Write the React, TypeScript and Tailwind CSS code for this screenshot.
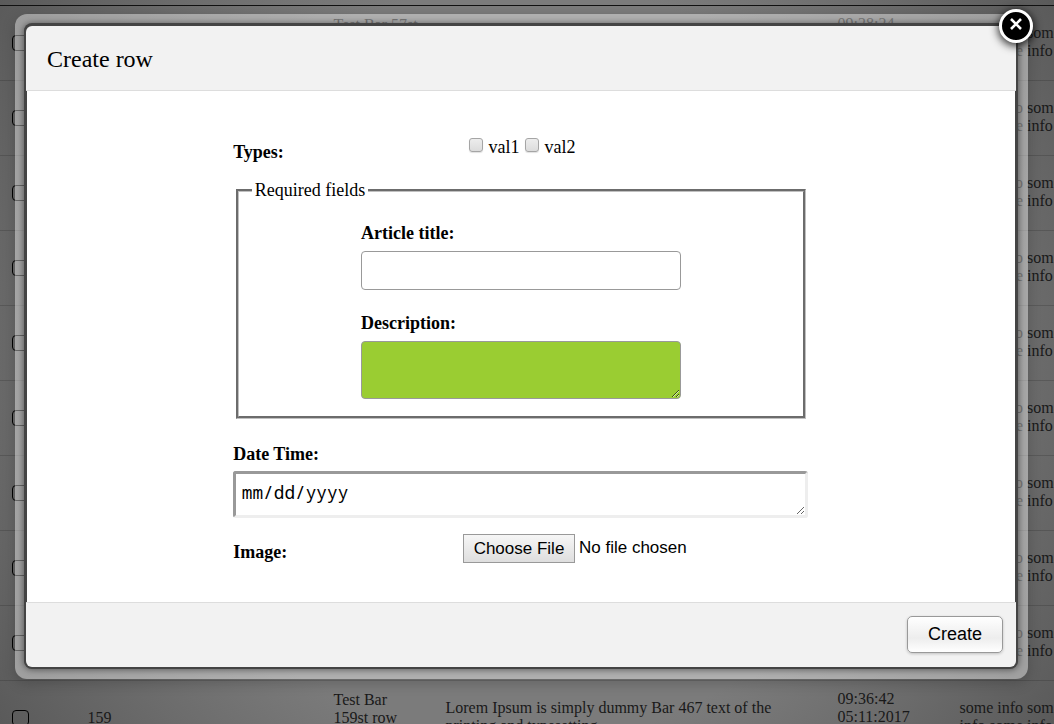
type Row = { id: string; name?: string; text?: string; time?: string; date?: string };

const ROWS: Row[] = [
  { id: "57", name: "Test Bar 57st", time: "09:28:24" },
  { id: "60" },
  { id: "72" },
  { id: "85" },
  { id: "97" },
  { id: "108" },
  { id: "121" },
  { id: "134" },
  { id: "146" },
  {
    id: "159",
    name: "Test Bar 159st row",
    text: "Lorem Ipsum is simply dummy Bar 467 text of the printing and typesetting",
    time: "09:36:42",
    date: "05:11:2017",
  },
];

function BackgroundTable() {
  return (
    <div className="h-full bg-[radial-gradient(circle_at_center,#7b7b7b_380px,#5a5a5a_640px)] text-[16px] leading-[18px] text-[#191919]">
      <div className="h-[6px] border-b border-[#111]" />
      {ROWS.map((row) => (
        <div key={row.id} className="flex h-[75px] items-center border-b border-black/15">
          <div className="w-[87.5px] shrink-0 pl-3">
            <div className="h-4 w-[17px] rounded-[4px] border border-black" />
          </div>
          <div className="w-[246px] shrink-0">{row.text ? row.id : null}</div>
          <div
            className={
              row.text
                ? "h-[54px] w-[112px] shrink-0 pr-8"
                : "h-[54px] w-[112px] shrink-0 whitespace-nowrap"
            }
          >
            {row.name}
          </div>
          <div className="w-[392px] shrink-0 pb-0.5 pr-[60px]">{row.text}</div>
          <div className="h-[56px] w-[122px] shrink-0">
            <div>{row.time}</div>
            <div>{row.date}</div>
          </div>
          <div className="shrink-0 whitespace-nowrap pb-0.5">
            some info some info
            <br />
            info some info some
          </div>
        </div>
      ))}
    </div>
  );
}

function Checkbox({ label }: { label: string }) {
  return (
    <label className="flex items-center">
      <span className="mr-[5.5px] -mt-1 block size-[14px] rounded-[3px] border border-[#a5a5a5] bg-linear-to-b from-[#ededed] to-[#dcdcdc] shadow-[0_1px_1px_rgba(0,0,0,0.12)]" />
      {label}
    </label>
  );
}

export default function App() {
  return (
    <div className="relative h-[724px] w-[1054px] overflow-hidden font-['Liberation_Serif',serif] text-black">
      <BackgroundTable />
      <div className="absolute left-[15px] top-[14px] h-[665px] w-[1013px] rounded-[12px] bg-white/40 pl-[11px] pt-3 shadow-[0_4px_14px_rgba(0,0,0,0.2)]">
        <div className="flex h-[641px] w-[990px] flex-col rounded-[6px] bg-[#444] shadow-[0_0_0_2px_#444,0_-1px_0_2px_#444,0_0_6px_3px_rgba(0,0,0,0.45)]">
          <header className="flex h-[65px] items-center rounded-t-[6px] border-b border-[#ddd] bg-[#f2f2f2] pl-[21px] pt-[2px] text-[24px]">
            Create row
          </header>
          <main className="mx-px h-[511px] bg-white pl-[206.2px] text-[18px] leading-5">
            <div className="flex h-[89px] pt-[46px]">
              <b className="w-[235.8px] pt-[5px]">Types:</b>
              <div className="flex h-5 gap-[5.5px]">
                <Checkbox label="val1" />
                <Checkbox label="val2" />
              </div>
            </div>
            <fieldset className="ml-[2.8px] h-[239px] w-[570px] border-[3px] border-[#c0c0c0] px-[12.8px] [border-style:groove]">
              <legend className="px-[3px]">Required fields</legend>
              <div className="ml-[109.2px] flex w-[320px] flex-col pt-[23px]">
                <b>Article title:</b>
                <input className="mt-2 h-[39px] rounded-[4px] border border-[#999] bg-white" />
                <b className="mt-[23px]">Description:</b>
                <textarea className="mt-2 h-[58px] resize rounded-[4px] border border-[#999] bg-[#9acd32]" />
              </div>
            </fieldset>
            <div className="flex w-[575px] flex-col pt-[25px]">
              <b>Date Time:</b>
              <textarea
                defaultValue="mm/dd/yyyy"
                className="mt-[7px] h-[47px] resize overflow-hidden rounded-[3px] border-[3px] border-b-[#eee] border-l-[#999] border-r-[#eee] border-t-[#999] px-[5.6px] pt-[8px] font-['Noto_Sans_Mono','DejaVu_Sans_Mono',monospace] text-[17.75px] leading-5"
              />
            </div>
            <div className="flex pt-4">
              <b className="w-[229.8px] pt-2">Image:</b>
              <div className="flex font-['Liberation_Sans',sans-serif] text-[17px]">
                <button className="h-[29px] w-[112px] border border-[#999] bg-linear-to-b from-[#f6f6f6] to-[#dedede]">
                  Choose File
                </button>
                <span className="ml-1 pt-1">No file chosen</span>
              </div>
            </div>
          </main>
          <footer className="flex h-[65px] justify-end rounded-b-[6px] border-t border-[#ddd] bg-[#f2f2f2] pr-[13px] pt-[13px] font-['Liberation_Sans',sans-serif]">
            <button className="h-[37px] w-[96px] rounded-[5px] border border-[#999] bg-linear-to-b from-white via-[#ededed] via-60% to-white text-[18px] shadow-[0_1px_3px_rgba(0,0,0,0.2)]">
              Create
            </button>
          </footer>
        </div>
      </div>
      <button
        aria-label="Close"
        className="absolute left-[999px] top-[9px] flex size-[34px] justify-center rounded-full border-[3px] border-white bg-black pt-[6px] shadow-[0_2px_8px_1px_rgba(0,0,0,0.8)]"
      >
        <svg width="12" height="12" viewBox="0 0 12 12" stroke="white" strokeWidth="2.6">
          <path d="M1 1L11 11M11 1L1 11" />
        </svg>
      </button>
    </div>
  );
}
